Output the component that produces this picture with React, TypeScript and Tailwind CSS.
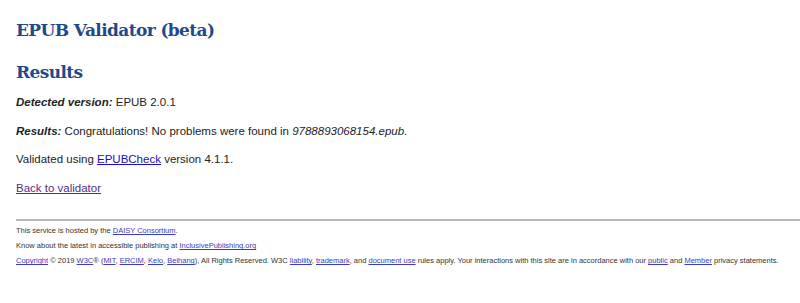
const footerLink = 'text-[#3b3bc4] underline'

function App() {
  return (
    <div className="min-h-screen bg-white pl-4 font-['Liberation_Sans',Arial,sans-serif] text-[#222]">
      <h1 className="pt-[19px] font-['DejaVu_Serif',Georgia,serif] text-[17px] font-bold leading-[22px] tracking-[-0.6px] text-[#1e4a8a]">
        EPUB Validator (beta)
      </h1>
      <h2 className="mt-[20px] font-['DejaVu_Serif',Georgia,serif] text-[17px] font-bold leading-[22px] tracking-[-0.6px] text-[#1e4a8a]">
        Results
      </h2>
      <div className="mt-[12px] flex flex-col gap-[14.7px] text-[11.5px] leading-[14px]">
        <p>
          <b className="italic">Detected version:</b> EPUB 2.0.1
        </p>
        <p>
          <b className="italic">Results:</b> Congratulations! No problems were found in{' '}
          <i>9788893068154.epub</i>.
        </p>
        <p>
          Validated using{' '}
          <a href="#" className="text-[#1a0dcc] underline">
            EPUBCheck
          </a>{' '}
          version 4.1.1.
        </p>
        <p>
          <a href="#" className="text-[#5a2a8a] underline">
            Back to validator
          </a>
        </p>
      </div>
      <hr className="mt-[24px] border-t-2 border-[#b5b5b5]" />
      <div className="mt-[5px] flex flex-col gap-[5px] whitespace-nowrap text-[7.5px] leading-[10px] text-[#333]">
        <p>
          This service is hosted by the{' '}
          <a href="#" className={footerLink}>
            DAISY Consortium
          </a>
          .
        </p>
        <p>
          Know about the latest in accessible publishing at{' '}
          <a href="#" className={footerLink}>
            InclusivePublishing.org
          </a>
        </p>
        <p>
          <a href="#" className={footerLink}>Copyright</a> © 2019{' '}
          <a href="#" className={footerLink}>W3C</a>® (
          <a href="#" className={footerLink}>MIT</a>,{' '}
          <a href="#" className={footerLink}>ERCIM</a>,{' '}
          <a href="#" className={footerLink}>Keio</a>,{' '}
          <a href="#" className={footerLink}>Beihang</a>), All Rights Reserved. W3C{' '}
          <a href="#" className={footerLink}>liability</a>,{' '}
          <a href="#" className={footerLink}>trademark</a>, and{' '}
          <a href="#" className={footerLink}>document use</a> rules apply. Your interactions with
          this site are in accordance with our{' '}
          <a href="#" className={footerLink}>public</a> and{' '}
          <a href="#" className={footerLink}>Member</a> privacy statements.
        </p>
      </div>
    </div>
  )
}

export default App
